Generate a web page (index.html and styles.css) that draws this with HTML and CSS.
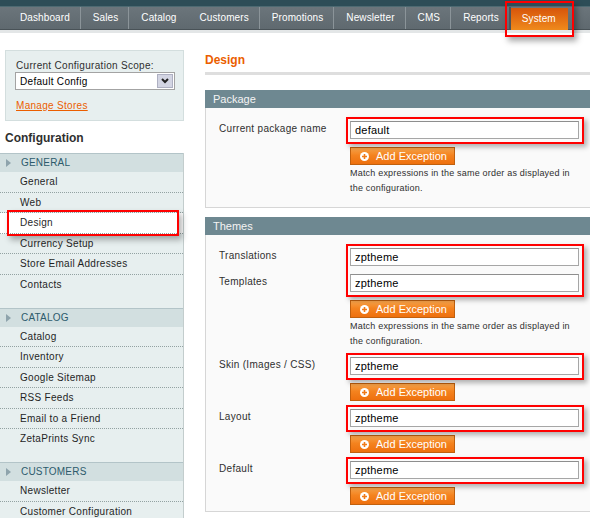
FILE: index.html
```html
<!DOCTYPE html>
<html lang="en">
<head>
<meta charset="utf-8">
<title>Configuration - Design</title>
<link rel="stylesheet" href="styles.css">
</head>
<body>
<div class="topbar"></div>
<nav class="nav">
  <ul class="nav-list">
    <li class="nav-item">Dashboard</li>
    <li class="nav-item">Sales</li>
    <li class="nav-item nosep">Catalog</li>
    <li class="nav-item">Customers</li>
    <li class="nav-item">Promotions</li>
    <li class="nav-item">Newsletter</li>
    <li class="nav-item">CMS</li>
    <li class="nav-item darksep">Reports</li>
    <li class="nav-item active">System</li>
  </ul>
</nav>
<div class="nav-edge"></div>
<div class="page">
  <aside class="side">
    <div class="scope">
      <div class="scope-label">Current Configuration Scope:</div>
      <div class="select">
        <span class="select-text">Default Config</span>
        <span class="select-btn"><svg width="8" height="6" viewBox="0 0 8 6"><polyline points="1,1 4,4 7,1" fill="none" stroke="#222" stroke-width="2"/></svg></span>
      </div>
      <a class="manage" href="#">Manage Stores</a>
    </div>
    <h3 class="side-title">Configuration</h3>
    <div class="tabs">
      <div class="tab-head">GENERAL</div>
      <ul class="tab-list">
        <li>General</li>
        <li>Web</li>
        <li class="active">Design</li>
        <li>Currency Setup</li>
        <li>Store Email Addresses</li>
        <li>Contacts</li>
      </ul>
      <div class="tab-head">CATALOG</div>
      <ul class="tab-list">
        <li>Catalog</li>
        <li>Inventory</li>
        <li>Google Sitemap</li>
        <li>RSS Feeds</li>
        <li>Email to a Friend</li>
        <li>ZetaPrints Sync</li>
      </ul>
      <div class="tab-head">CUSTOMERS</div>
      <ul class="tab-list last">
        <li>Newsletter</li>
        <li>Customer Configuration</li>
      </ul>
    </div>
  </aside>
  <main class="main">
    <div class="content-header"><h3>Design</h3></div>

    <section class="section">
      <div class="section-head">Package</div>
      <div class="section-body package">
        <div class="label">Current package name</div>
        <div class="value mark"><input class="input" type="text" value="default"></div>
        <button class="btn value" type="button"><svg class="plus" width="9" height="9" viewBox="0 0 9 9"><circle cx="4.5" cy="4.5" r="4.5" fill="#fff"/><path d="M4.5 2v5M2 4.5h5" stroke="#f07a18" stroke-width="1.6"/></svg>Add Exception</button>
        <div class="note value">Match expressions in the same order as displayed in the configuration.</div>
      </div>
    </section>

    <section class="section">
      <div class="section-head">Themes</div>
      <div class="section-body themes">
        <div class="label">Translations</div>
        <div class="value mark pair">
          <input class="input" type="text" value="zptheme">
          <input class="input" type="text" value="zptheme">
        </div>
        <div class="label">Templates</div>
        <button class="btn value" type="button"><svg class="plus" width="9" height="9" viewBox="0 0 9 9"><circle cx="4.5" cy="4.5" r="4.5" fill="#fff"/><path d="M4.5 2v5M2 4.5h5" stroke="#f07a18" stroke-width="1.6"/></svg>Add Exception</button>
        <div class="note value">Match expressions in the same order as displayed in the configuration.</div>

        <div class="label">Skin (Images / CSS)</div>
        <div class="value mark"><input class="input" type="text" value="zptheme"></div>
        <button class="btn value" type="button"><svg class="plus" width="9" height="9" viewBox="0 0 9 9"><circle cx="4.5" cy="4.5" r="4.5" fill="#fff"/><path d="M4.5 2v5M2 4.5h5" stroke="#f07a18" stroke-width="1.6"/></svg>Add Exception</button>

        <div class="label">Layout</div>
        <div class="value mark"><input class="input" type="text" value="zptheme"></div>
        <button class="btn value" type="button"><svg class="plus" width="9" height="9" viewBox="0 0 9 9"><circle cx="4.5" cy="4.5" r="4.5" fill="#fff"/><path d="M4.5 2v5M2 4.5h5" stroke="#f07a18" stroke-width="1.6"/></svg>Add Exception</button>

        <div class="label">Default</div>
        <div class="value mark"><input class="input" type="text" value="zptheme"></div>
        <button class="btn value" type="button"><svg class="plus" width="9" height="9" viewBox="0 0 9 9"><circle cx="4.5" cy="4.5" r="4.5" fill="#fff"/><path d="M4.5 2v5M2 4.5h5" stroke="#f07a18" stroke-width="1.6"/></svg>Add Exception</button>
      </div>
    </section>
  </main>
</div>
</body>
</html>
```

FILE: styles.css
```css
html, body {
  margin: 0;
  padding: 0;
  background: #fff;
  overflow: hidden;
}
body {
  width: 590px;
  height: 518px;
  font-family: "Liberation Sans", Arial, Helvetica, sans-serif;
  color: #2f2f2f;
}

/* top navigation */
.topbar {
  height: 6px;
  background: #2d4d57;
  border-bottom: 1px solid #4d6a72;
}
.nav {
  height: 22px;
  background: linear-gradient(#6b757b, #5f696f);
  border-bottom: 1px solid #495257;
}
.nav-edge {
  height: 3px;
  background: #e3e6e7;
}
.nav-list {
  display: flex;
  margin: 0;
  padding: 0 0 0 8px;
  list-style: none;
  height: 22px;
}
.nav-item {
  padding: 0 10px 0 12px;
  line-height: 22px;
  font-size: 10px;
  letter-spacing: 0.1px;
  color: #fff;
  border-right: 1px solid #8b9499;
  white-space: nowrap;
}
.nav-item.nosep {
  border-right-color: transparent;
}
.nav-item.darksep {
  border-right: 2px solid #4b5459;
}
.nav-item.active {
  position: relative;
  margin-top: 1px;
  height: 22px;
  padding: 0 12px 0 11px;
  border-right: 0;
  background: linear-gradient(#d7550b, #ef8a1c);
}
.nav-item.active::after {
  content: "";
  position: absolute;
  left: -6px;
  right: -6px;
  top: -7px;
  bottom: -7px;
  border: 2px solid #f00;
  box-shadow: 3px 4px 6px rgba(0, 0, 0, 0.35);
}

/* layout */
.page {
  display: flex;
  align-items: flex-start;
}
.side {
  width: 184px;
  flex: none;
}
.main {
  margin-left: 21px;
  width: 400px;
  flex: none;
}

/* scope box */
.scope {
  margin: 17px 0 0 5px;
  width: 179px;
  box-sizing: border-box;
  background: #e7efef;
  border: 1px solid #d3dede;
  padding: 9px 0 8px 10px;
}
.scope-label {
  font-size: 10px;
  letter-spacing: 0.3px;
  line-height: 12px;
}
.select {
  display: flex;
  align-items: center;
  justify-content: space-between;
  margin-left: -1px;
  width: 160px;
  height: 18px;
  box-sizing: border-box;
  background: #fff;
  border: 1px solid #a3a3a3;
  padding: 0 1px 0 4px;
}
.select-text {
  font-size: 10px;
  letter-spacing: 0.3px;
  color: #000;
}
.select-btn {
  display: flex;
  align-items: center;
  justify-content: center;
  width: 16px;
  height: 14px;
  box-sizing: border-box;
  background: #d3d5e3;
  border: 1px solid #aeb0c2;
}
.manage {
  display: block;
  margin-top: 10px;
  line-height: 12px;
  font-size: 10px;
  letter-spacing: 0.3px;
  color: #eb5e00;
  text-decoration: underline;
}

.side-title {
  margin: 9px 0 7px 5px;
  font-size: 12px;
  line-height: 16px;
  font-weight: bold;
  color: #2f2f2f;
}

/* config tabs */
.tabs {
  background: #e7efef;
  border-right: 1px solid #c3cdcd;
}
.tab-head {
  position: relative;
  height: 18px;
  line-height: 18px;
  border-top: 1px solid #b3c4c8;
  background: #d2dfe0;
  padding-left: 21px;
  font-size: 10px;
  letter-spacing: 0.2px;
  color: #2d5b6c;
}
.tab-head::before {
  content: "";
  position: absolute;
  left: 6px;
  top: 5px;
  border-left: 5px solid #8ea3ac;
  border-top: 4px solid transparent;
  border-bottom: 4px solid transparent;
}
.tab-list {
  list-style: none;
  margin: 0;
  padding: 0 0 12.5px;
}
.tab-list.last {
  padding-bottom: 0;
}
.tab-list li {
  line-height: 19.5px;
  padding-left: 20px;
  font-size: 10px;
  letter-spacing: 0.3px;
  color: #1f1f1f;
  border-bottom: 1px dotted #93a2a2;
}
.tab-list li:last-child {
  border-bottom-color: transparent;
}
.tab-list li.active {
  position: relative;
  background: #fff;
}
.tab-list li.active::after {
  content: "";
  position: absolute;
  left: 7px;
  right: 4px;
  top: -3px;
  bottom: -3px;
  border: 2px solid #f00;
  box-shadow: 3px 4px 6px rgba(0, 0, 0, 0.3);
}

/* main content */
.content-header {
  margin-top: 20px;
  padding-bottom: 4px;
  border-bottom: 3px solid #dedede;
}
.content-header h3 {
  margin: 0;
  font-size: 12px;
  line-height: 15px;
  font-weight: bold;
  color: #eb5e00;
}
.section {
  margin-top: 15px;
}
.section + .section {
  margin-top: 9px;
}
.section-head {
  height: 18px;
  line-height: 18px;
  background: #6e8891;
  color: #f4f4f4;
  font-size: 11px;
  padding-left: 8px;
}
.section-body {
  display: grid;
  grid-template-columns: 131px 229px;
  row-gap: 8px;
  background: #fafafa;
  border: 1px solid #d6d6d6;
  border-top: 0;
  padding: 13px 0 12px 13px;
}
.section-body.package {
  padding-bottom: 11px;
}
.section-body.themes {
  padding-bottom: 6px;
}
.label {
  grid-column: 1;
  height: 18px;
  line-height: 15px;
  font-size: 10px;
  letter-spacing: 0.3px;
  color: #2f2f2f;
  white-space: nowrap;
}
.value {
  grid-column: 2;
}
.mark {
  position: relative;
}
.mark::after {
  content: "";
  position: absolute;
  top: -4px;
  left: -4px;
  right: -5px;
  bottom: -5px;
  border: 2px solid #f00;
  box-shadow: 3px 3px 5px rgba(0, 0, 0, 0.3);
  pointer-events: none;
}
.pair {
  grid-row: span 2;
  display: flex;
  flex-direction: column;
  gap: 8px;
}
.input {
  display: block;
  width: 229px;
  height: 18px;
  box-sizing: border-box;
  margin: 0;
  border: 1px solid #a6a6a6;
  border-top-color: #8e8e8e;
  background: #fff;
  padding: 0 4px;
  font-family: "Liberation Sans", Arial, Helvetica, sans-serif;
  font-size: 11px;
  letter-spacing: 0.2px;
  color: #000;
  outline: none;
}
.btn {
  justify-self: start;
  display: flex;
  align-items: center;
  gap: 7px;
  width: 105px;
  height: 18px;
  box-sizing: border-box;
  margin: 0;
  padding: 0 0 0 9px;
  border: 1px solid #c0600e;
  background: linear-gradient(#f9a54c, #f4831f 45%, #ee700e);
  color: #fff;
  font-family: "Liberation Sans", Arial, Helvetica, sans-serif;
  font-size: 11px;
  white-space: nowrap;
}
.plus {
  display: block;
  flex: none;
}
.note {
  margin-top: -7px;
  font-size: 9px;
  letter-spacing: 0.2px;
  line-height: 15px;
  color: #2f2f2f;
}
```
